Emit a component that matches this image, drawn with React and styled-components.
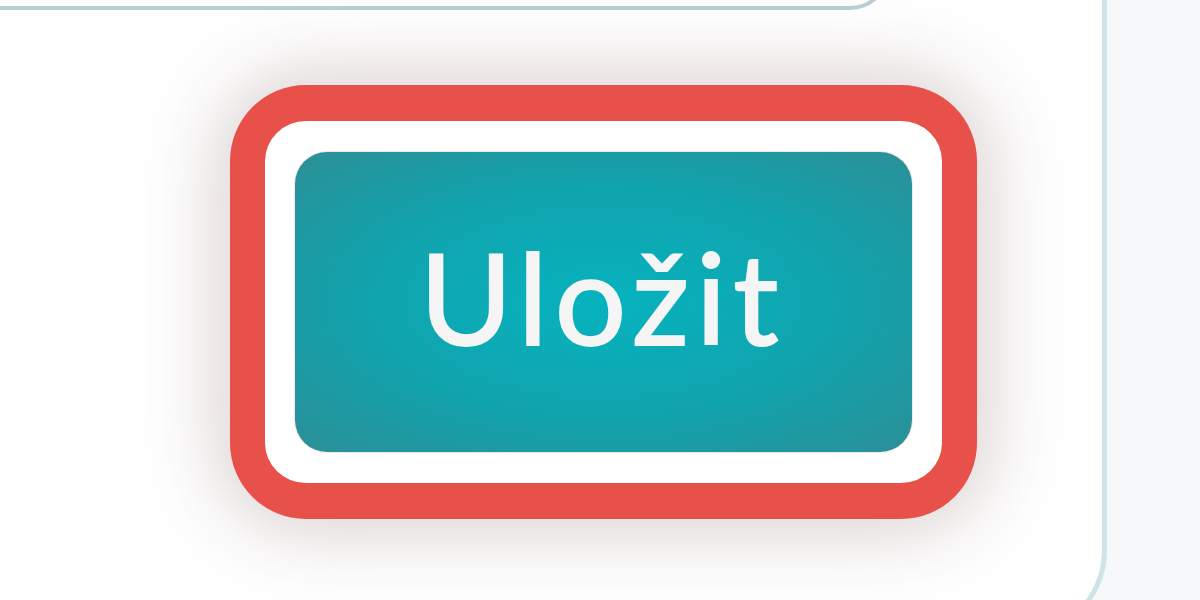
import React from "react";
import styled, { createGlobalStyle } from "styled-components";

const GlobalStyle = createGlobalStyle`
  html, body {
    margin: 0;
    padding: 0;
    height: 100%;
    overflow: hidden;
    background: #f6f8fa;
    font-family: "Lato", "Noto Sans", sans-serif;
  }
`;

const Page = styled.div`
  display: flex;
  width: 1200px;
  height: 600px;
  overflow: hidden;
  background: #f6f8fa;
`;

const Card = styled.div`
  width: 1107px;
  height: 640px;
  flex-shrink: 0;
  background: #ffffff;
  border-right: 5px solid #cfe4e6;
  border-bottom: 5px solid #cfe4e6;
  border-bottom-right-radius: 90px;
  box-sizing: border-box;
  display: flex;
  flex-direction: column;
`;

const Field = styled.div`
  width: 940px;
  height: 120px;
  margin: -110px 0 0 -50px;
  border: 4px solid #b9cfd6;
  border-radius: 40px;
  box-sizing: border-box;
  background: #ffffff;
`;

const Actions = styled.div`
  display: flex;
  padding: 75px 0 0 230px;
`;

const FocusRing = styled.div`
  display: flex;
  padding: 31px 30px;
  border: solid #e8514a;
  border-width: 36px 35px;
  border-radius: 76px;
  background: #ffffff;
  box-shadow: 0 0 75px 14px rgba(120, 80, 80, 0.26);
`;

const SaveButton = styled.button`
  width: 617px;
  height: 300px;
  border: none;
  border-radius: 32px;
  background: radial-gradient(ellipse at center, #06b3bf 0%, #11a3ad 55%, #2c8f96 100%);
  box-shadow: 0 0 0 1px rgba(230, 180, 180, 0.35);
  color: #f5f5f5;
  -webkit-text-stroke: 2px #f5f5f5;
  font-family: "Lato", "Noto Sans", sans-serif;
  font-size: 126px;
  font-weight: 400;
  letter-spacing: 7px;
  line-height: 1;
  padding: 0 2px 10px 0;
  cursor: pointer;
`;

export default function App() {
  return (
    <>
      <GlobalStyle />
      <Page>
        <Card>
          <Field />
          <Actions>
            <FocusRing>
              <SaveButton type="button">Uložit</SaveButton>
            </FocusRing>
          </Actions>
        </Card>
      </Page>
    </>
  );
}
